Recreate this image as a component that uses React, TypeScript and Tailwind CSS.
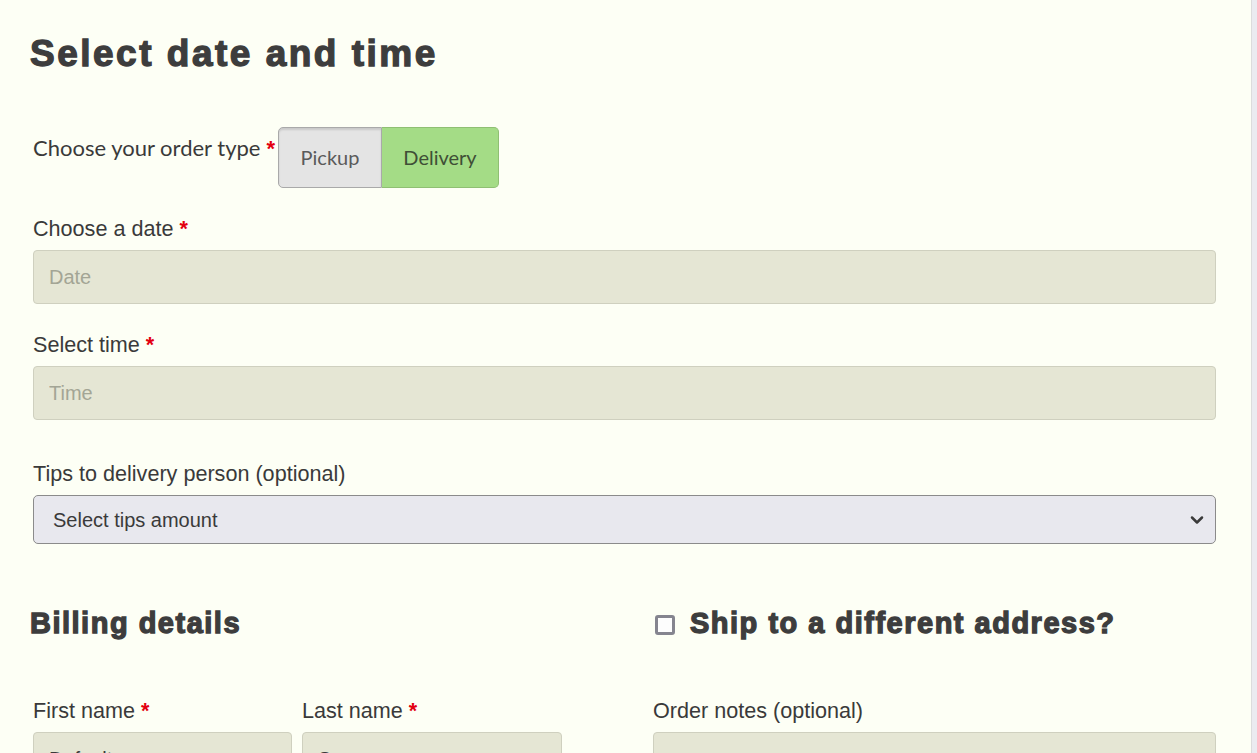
import { ChevronDown } from "lucide-react"

const heading = "font-['Liberation_Sans',Arial,sans-serif] font-bold text-[#3d3d3d] leading-none [-webkit-text-stroke:1.3px_#3d3d3d]"
const label = "pt-[2px] font-['Liberation_Sans',Arial,sans-serif] text-[21.6px] leading-[24px] text-[#3a3a3a]"
const field = "block w-full h-[54px] rounded-[4px] border border-[#cfd0bf] bg-[#e5e6d4] px-[15px] font-['Liberation_Sans',Arial,sans-serif] text-[20px] text-[#3a3a3a] placeholder:text-[#a3a595] outline-none"

const Req = () => (
  <span className="font-['Liberation_Sans',Arial,sans-serif] font-bold text-[#e3000f] ml-[6px]">*</span>
)

const App = () => {
  return (
    <div className="min-h-screen flex bg-[#fdfff5] overflow-hidden">
      <div className="flex-1 pl-[33px] pr-[35px]">
        <h1 className={`${heading} text-[37px] tracking-[2.5px] mt-[35px] -ml-[3px]`}>Select date and time</h1>

        <div className="flex items-start mt-[56px]">
          <div className="mt-[7px] font-['Lato',sans-serif] text-[22px] leading-[26px] text-[#3a3a3a]">
            Choose your order type
            <span className="font-['Liberation_Sans',Arial,sans-serif] font-bold text-[#e3000f] ml-[6px] mr-[3px]">*</span>
          </div>
          <div className="flex h-[61px] -mt-[1px] font-['Lato',sans-serif] text-[20px] leading-none">
            <button className="w-[104px] pb-[2px] rounded-l-[5px] border border-[#a9a9a9] bg-[#e4e4e4] text-[#5a5a5a] shadow-[inset_0_2px_2px_rgba(0,0,0,0.12)]">
              Pickup
            </button>
            <button className="w-[117px] pb-[2px] rounded-r-[5px] border border-l-0 border-[#8fbf73] bg-[#a4dc86] text-[#3f4f36]">
              Delivery
            </button>
          </div>
        </div>

        <div className={`${label} mt-[27px]`}>Choose a date<Req /></div>
        <input readOnly placeholder="Date" className={`${field} mt-[9px]`} />

        <div className={`${label} mt-[27px]`}>Select time<Req /></div>
        <input readOnly placeholder="Time" className={`${field} mt-[9px]`} />

        <div className={`${label} mt-[40px]`}>Tips to delivery person (optional)</div>
        <div className="mt-[9px] h-[49px] flex items-center justify-between rounded-[5px] border border-[#8b8b8b] bg-[#e8e8ee] pl-[19px] pr-[8px] font-['Liberation_Sans',Arial,sans-serif] text-[20px] text-[#3a3a3a]">
          <span>Select tips amount</span>
          <ChevronDown size={20} strokeWidth={3} className="text-[#3a3a3a]" />
        </div>

        <div className="flex mt-[65px]">
          <div className="w-[529px]">
            <h2 className={`${heading} text-[29px] tracking-[1.5px] -ml-[3px]`}>Billing details</h2>
            <div className="flex gap-[10px] mt-[59px]">
              <div className="w-[259px]">
                <div className={label}>First name<Req /></div>
                <input readOnly defaultValue="Default" className={`${field} mt-[9px]`} />
              </div>
              <div className="w-[260px]">
                <div className={label}>Last name<Req /></div>
                <input readOnly defaultValue="Surname" className={`${field} mt-[9px]`} />
              </div>
            </div>
          </div>
          <div className="flex-1 ml-[91px]">
            <div className="flex items-center">
              <span className="box-border w-[20px] h-[20px] ml-[2px] mt-[3px] rounded-[3px] border-[3px] border-[#85858f] bg-[#fdfdfd]" />
              <h2 className={`${heading} text-[29px] tracking-[1.5px] ml-[15px]`}>Ship to a different address?</h2>
            </div>
            <div className={`${label} mt-[59px]`}>Order notes (optional)</div>
            <textarea readOnly className={`${field} mt-[9px] h-[120px] resize-none`} />
          </div>
        </div>
      </div>
      <div className="w-[6px] border-l border-[#dcdcdc] bg-[#ebebf0]" />
    </div>
  )
}

export default App
